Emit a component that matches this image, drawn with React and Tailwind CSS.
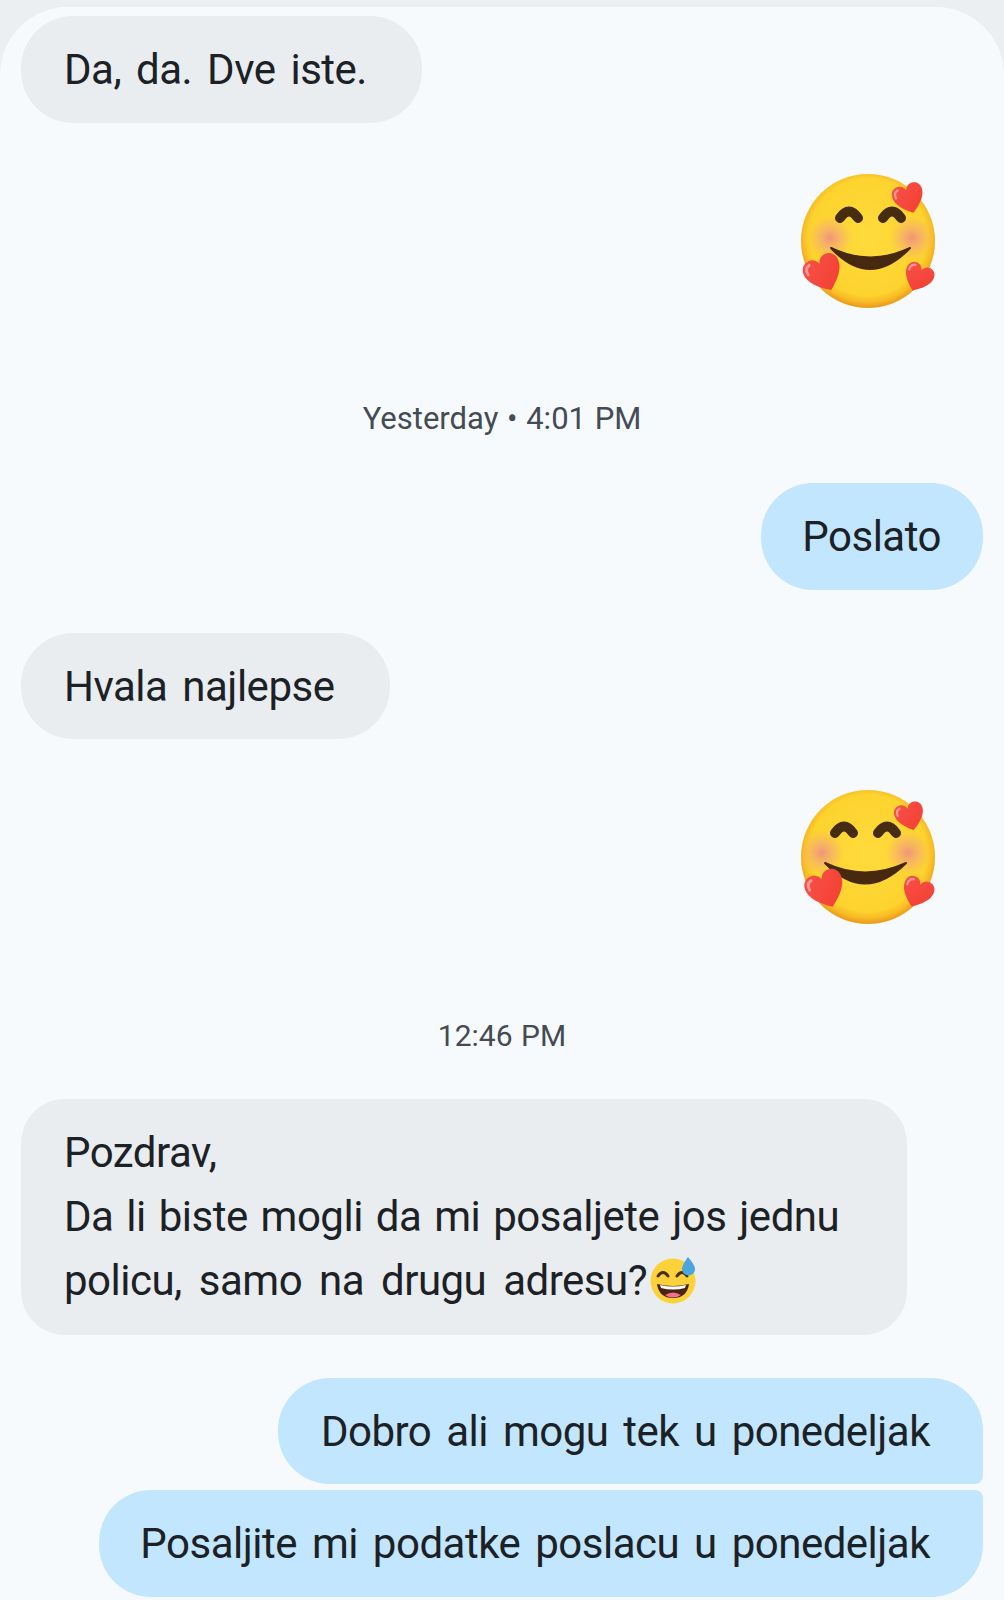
const Heart = ({ x, y, size, rotate, id }) => (
  <g transform={`translate(${x} ${y}) rotate(${rotate}) scale(${size / 100}) translate(-50 -50)`}>
    <path
      d="M50 94 C22 74 3 54 3 31 C3 14 15 5 28 5 C38 5 46 11 50 22 C54 11 62 5 72 5 C85 5 97 14 97 31 C97 54 78 74 50 94Z"
      fill={`url(#${id})`}
    />
    <path d="M13 36 C11 24 16 17 25 15" fill="none" stroke="#fb9a90" strokeWidth="7" strokeLinecap="round" />
  </g>
);

const HeartEmoji = ({ variant }) => {
  const id = 'face' + variant;
  const one = variant === 1;
  return (
    <svg viewBox="0 0 160 160" className="w-[160px] h-[160px]">
      <defs>
        <radialGradient id={id} cx="50%" cy="47%" r="52%">
          <stop offset="0%" stopColor="#fedb3c" />
          <stop offset="84%" stopColor="#fdd32e" />
          <stop offset="94%" stopColor="#f7b925" />
          <stop offset="100%" stopColor="#ee9f1c" />
        </radialGradient>
        <radialGradient id={id + 'b'}>
          <stop offset="0%" stopColor="#f0957a" />
          <stop offset="55%" stopColor="#f5ad72" stopOpacity="0.6" />
          <stop offset="100%" stopColor="#f8b070" stopOpacity="0" />
        </radialGradient>
        <linearGradient id={id + 'h'} x1="0" y1="0" x2="1" y2="1">
          <stop offset="0%" stopColor="#f8504a" />
          <stop offset="75%" stopColor="#f44336" />
          <stop offset="100%" stopColor="#d8302a" />
        </linearGradient>
      </defs>
      <circle cx="88" cy={one ? 81 : 82} r="67" fill={`url(#${id})`} />
      <circle cx={one ? 50 : 42} cy="78" r="22" fill={`url(#${id}b)`} />
      <circle cx={one ? 132 : 128} cy="78" r="22" fill={`url(#${id}b)`} />
      <path
        d={one ? 'M60 58 Q69 45 78 58 M103 58 Q112 45 121 58' : 'M55 58 Q64 45 73 58 M98 58 Q107 45 116 58'}
        fill="none"
        stroke="#452c12"
        strokeWidth="10"
        strokeLinecap="round"
      />
      <path
        d={one ? 'M51 88 Q90 107 130 88 Q90 130 51 88Z' : 'M45 88 Q85 107 126 88 Q85 129 45 88Z'}
        fill="#46290f"
        stroke="#46290f"
        strokeWidth="2"
        strokeLinejoin="round"
      />
      {one ? (
        <>
          <Heart id={id + 'h'} x={129} y={39} size={33} rotate={-18} />
          <Heart id={id + 'h'} x={44} y={114} size={40} rotate={-24} />
          <Heart id={id + 'h'} x={138} y={118} size={31} rotate={24} />
        </>
      ) : (
        <>
          <Heart id={id + 'h'} x={130} y={42} size={31} rotate={-16} />
          <Heart id={id + 'h'} x={46} y={115} size={41} rotate={-22} />
          <Heart id={id + 'h'} x={137} y={118} size={33} rotate={22} />
        </>
      )}
    </svg>
  );
};

const SweatEmoji = () => (
  <svg viewBox="0 0 48 48" className="inline-block w-[48px] h-[48px] ml-[2px] align-[-10px]">
    <circle cx="24" cy="24" r="22.5" fill="#fcd23a" />
    <path d="M9 19 Q14 12 19 19 M28 19 Q33 12 38 19" fill="none" stroke="#4a2f14" strokeWidth="3" strokeLinecap="round" />
    <path d="M8 27 Q24 31 40 27 Q38 41 24 41 Q10 41 8 27Z" fill="#4a2412" />
    <path d="M11 28 Q24 31 37 28 L36 31 Q24 34 12 31Z" fill="#fff" />
    <path d="M16 38 Q24 33 32 38 Q24 43 16 38Z" fill="#f0718a" />
    <path d="M39 0 Q46 8 46 12 A6.5 6.5 0 0 1 33 12 Q33 8 39 0Z" fill="#4aa6dc" />
  </svg>
);

const Incoming = ({ children, className = '' }) => (
  <div className={`bg-[#e9edf0] pl-[43px] ${className}`}>{children}</div>
);

const Outgoing = ({ children, className = '' }) => (
  <div className={`bg-[#c2e6fd] w-fit ml-auto flex items-center ${className}`}>{children}</div>
);

const Stamp = ({ children, className = '' }) => (
  <div className={`text-center text-[#444b52] leading-[40px] tracking-normal [word-spacing:1px] ${className}`}>{children}</div>
);

export default function App() {
  return (
    <div className="w-[1004px] h-[1600px] overflow-hidden bg-[#eceff1] pt-[7px] font-['Roboto',sans-serif] text-[42px] tracking-[-0.5px] [word-spacing:5px] text-[#1c2126]">
      <div className="h-[1593px] bg-[#f6fafd] rounded-t-[68px] px-[21px] pt-[9px]">
        <Incoming className="w-fit h-[107px] flex items-center rounded-[52px] pr-[55px]">Da, da. Dve iste.</Incoming>

        <div className="flex justify-end mt-[37px] mr-[43px]">
          <HeartEmoji variant={1} />
        </div>

        <Stamp className="mt-[79px] text-[31px]">Yesterday • 4:01 PM</Stamp>

        <Outgoing className="h-[107px] rounded-[52px] pl-[41px] pr-[42px] mt-[44px]">Poslato</Outgoing>

        <Incoming className="w-fit h-[106px] flex items-center rounded-[52px] pr-[56px] mt-[43px]">Hvala najlepse</Incoming>

        <div className="flex justify-end mt-[36px] mr-[43px]">
          <HeartEmoji variant={2} />
        </div>

        <Stamp className="mt-[81px] text-[30px]">12:46 PM</Stamp>

        <Incoming className="mt-[43px] py-[22px] w-[886px] leading-[64px] rounded-[44px]">
          Pozdrav,<br />
          <span className="[word-spacing:3px]">Da li biste mogli da mi posaljete jos jednu</span><br />
          <span className="[word-spacing:7px]">policu, samo na drugu adresu?</span><SweatEmoji />
        </Incoming>

        <Outgoing className="h-[106px] mt-[43px] rounded-[52px] rounded-br-[8px] pl-[43px] pr-[53px]">Dobro ali mogu tek u ponedeljak</Outgoing>
        <Outgoing className="h-[107px] mt-[6px] rounded-[52px] rounded-tr-[8px] pl-[41px] pr-[53px]">Posaljite mi podatke poslacu u ponedeljak</Outgoing>
      </div>
    </div>
  );
}
